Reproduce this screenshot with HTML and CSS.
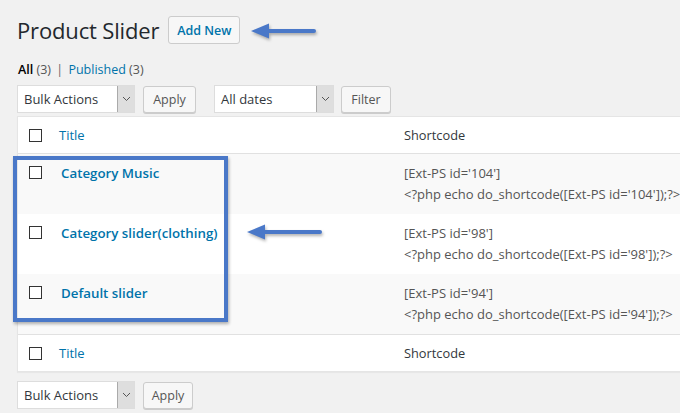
FILE: index.html
```html
<!DOCTYPE html>
<html>
<head>
<meta charset="utf-8">
<link rel="stylesheet" href="styles.css">
</head>
<body>
<div class="wrap">
  <div class="head">
    <h1>Product Slider</h1>
    <a class="btn add">Add New</a>
  </div>
  <div class="subsubsub"><b>All</b> <span class="count">(3)</span> <span class="sep">|</span> <a>Published</a> <span class="count">(3)</span></div>
  <div class="tablenav">
    <div class="select bulk"><span class="label">Bulk Actions</span><span class="caret"><svg width="9" height="6" viewBox="0 0 9 6"><path d="M1 1l3.5 3.5L8 1" fill="none" stroke="#555" stroke-width="1"/></svg></span></div>
    <a class="btn">Apply</a>
    <div class="select dates"><span class="label">All dates</span><span class="caret"><svg width="9" height="6" viewBox="0 0 9 6"><path d="M1 1l3.5 3.5L8 1" fill="none" stroke="#555" stroke-width="1"/></svg></span></div>
    <a class="btn">Filter</a>
  </div>
  <div class="table">
    <div class="row thead">
      <div class="cb"><span class="box"></span></div>
      <div class="col-title"><a>Title</a></div>
      <div class="col-code">Shortcode</div>
    </div>
    <div class="row alt">
      <div class="cb"><span class="box"></span></div>
      <div class="col-title"><a class="name">Category Music</a></div>
      <div class="col-code">[Ext-PS id='104']<br>&lt;?php echo do_shortcode([Ext-PS id='104']);?&gt;</div>
    </div>
    <div class="row">
      <div class="cb"><span class="box"></span></div>
      <div class="col-title"><a class="name">Category slider(clothing)</a></div>
      <div class="col-code">[Ext-PS id='98']<br>&lt;?php echo do_shortcode([Ext-PS id='98']);?&gt;</div>
    </div>
    <div class="row alt">
      <div class="cb"><span class="box"></span></div>
      <div class="col-title"><a class="name">Default slider</a></div>
      <div class="col-code">[Ext-PS id='94']<br>&lt;?php echo do_shortcode([Ext-PS id='94']);?&gt;</div>
    </div>
    <div class="row tfoot">
      <div class="cb"><span class="box"></span></div>
      <div class="col-title"><a>Title</a></div>
      <div class="col-code">Shortcode</div>
    </div>
  </div>
  <div class="tablenav bottom">
    <div class="select bulk"><span class="label">Bulk Actions</span><span class="caret"><svg width="9" height="6" viewBox="0 0 9 6"><path d="M1 1l3.5 3.5L8 1" fill="none" stroke="#555" stroke-width="1"/></svg></span></div>
    <a class="btn">Apply</a>
  </div>

  <div class="highlight"></div>
  <svg class="arrow arrow1" width="70" height="20" viewBox="0 0 70 20"><path d="M18 10H64" stroke="#4a78c8" stroke-width="4" stroke-linecap="round"/><path d="M1 10L19 2.5V17.5Z" fill="#4a78c8"/></svg>
  <svg class="arrow arrow2" width="80" height="20" viewBox="0 0 80 20"><path d="M18 10H74" stroke="#4a78c8" stroke-width="4" stroke-linecap="round"/><path d="M1 10L19 2.5V17.5Z" fill="#4a78c8"/></svg>
</div>
</body>
</html>
```

FILE: styles.css
```css
html, body {
  margin: 0;
  padding: 0;
  background: #f1f1f1;
  overflow: hidden;
}
body {
  font-family: "Open Sans", "Noto Sans", sans-serif;
  font-size: 12px;
  color: #444;
  width: 680px;
  height: 413px;
}
a { color: #0073aa; text-decoration: none; }
.wrap {
  position: relative;
  padding: 14px 0 0 17px;
}
.head {
  display: flex;
  align-items: center;
  gap: 9px;
  height: 32px;
}
h1 {
  margin: 0;
  font-size: 22px;
  font-weight: 400;
  color: #23282d;
  letter-spacing: -0.15px;
}
.btn {
  display: inline-flex;
  align-items: center;
  justify-content: center;
  box-sizing: border-box;
  height: 27px;
  padding: 0 10px;
  border: 1px solid #ccc;
  border-radius: 3px;
  background: #f7f7f7;
  box-shadow: 0 1px 0 #ccc;
  color: #555;
  font-size: 12.5px;
}
.btn.add {
  color: #0073aa;
  font-weight: 600;
  height: 28px;
  width: 72px;
  padding: 0;
  background: #f7f7f7;
  box-shadow: none;
}
.subsubsub {
  margin-top: 15px;
  margin-left: 1px;
  height: 18px;
  font-size: 12.5px;
  color: #000;
}
.subsubsub b { font-weight: 600; color: #000; }
.subsubsub .count { color: #555; }
.subsubsub .sep { color: #666; margin: 0 2px; }
.tablenav {
  display: flex;
  align-items: center;
  height: 28px;
  margin-top: 6px;
}
.tablenav.bottom { margin-top: 9px; }
.select {
  display: flex;
  box-sizing: border-box;
  height: 28px;
  background: #fff;
  border: 1px solid #ddd;
  font-size: 13px;
  color: #32373c;
}
.select .label {
  flex: 1;
  padding-left: 6px;
  line-height: 26px;
}
.select .caret {
  width: 16px;
  background: #dedede;
  border-left: 1px solid #aaa;
  display: flex;
  align-items: center;
  justify-content: center;
}
.select.bulk { width: 118px; margin-right: 8px; }
.select.dates { width: 120px; margin-left: 18px; margin-right: 7px; }
.tablenav .btn { width: 53px; padding: 0; }
.tablenav .btn:last-child { width: 50px; }
.table {
  width: 700px;
  margin-top: 3px;
  background: #fff;
  border: 1px solid #e5e5e5;
  box-shadow: 0 1px 1px rgba(0,0,0,0.04);
}
.row {
  display: flex;
  height: 60px;
  padding-top: 10px;
  box-sizing: border-box;
}
.row.alt { background: #f9f9f9; }
.row.thead, .row.tfoot {
  height: 37px;
  padding-top: 0;
  align-items: center;
}
.row.thead { border-bottom: 1px solid #e1e1e1; }
.row.tfoot { border-top: 1px solid #e1e1e1; }
.cb {
  width: 41px;
  padding-left: 11px;
  box-sizing: border-box;
}
.box {
  display: block;
  width: 13px;
  height: 13px;
  box-sizing: border-box;
  border: 1px solid #333;
  background: #fff;
}
.row:not(.thead):not(.tfoot) .box { margin-top: 2px; }
.col-title {
  width: 345px;
  font-size: 13px;
}
.col-title a.name {
  margin-left: 2px;
  font-weight: 600;
  font-size: 13.3px;
}
.col-code {
  font-size: 13px;
  color: #555;
  line-height: 21px;
  margin-top: -1px;
  letter-spacing: 0;
}
.thead .col-code, .tfoot .col-code { color: #32373c; font-size: 12.8px; margin-top: 0; letter-spacing: 0; }
.highlight {
  position: absolute;
  left: 13px;
  top: 156px;
  width: 215px;
  height: 166px;
  box-sizing: border-box;
  border: 4px solid #4a78c8;
  box-shadow: 1px 2px 3px rgba(0,0,0,0.3);
}
.arrow {
  position: absolute;
  filter: drop-shadow(1px 2px 1.5px rgba(0,0,0,0.3));
}
.arrow1 { left: 250px; top: 21px; }
.arrow2 { left: 246px; top: 222px; }
```
